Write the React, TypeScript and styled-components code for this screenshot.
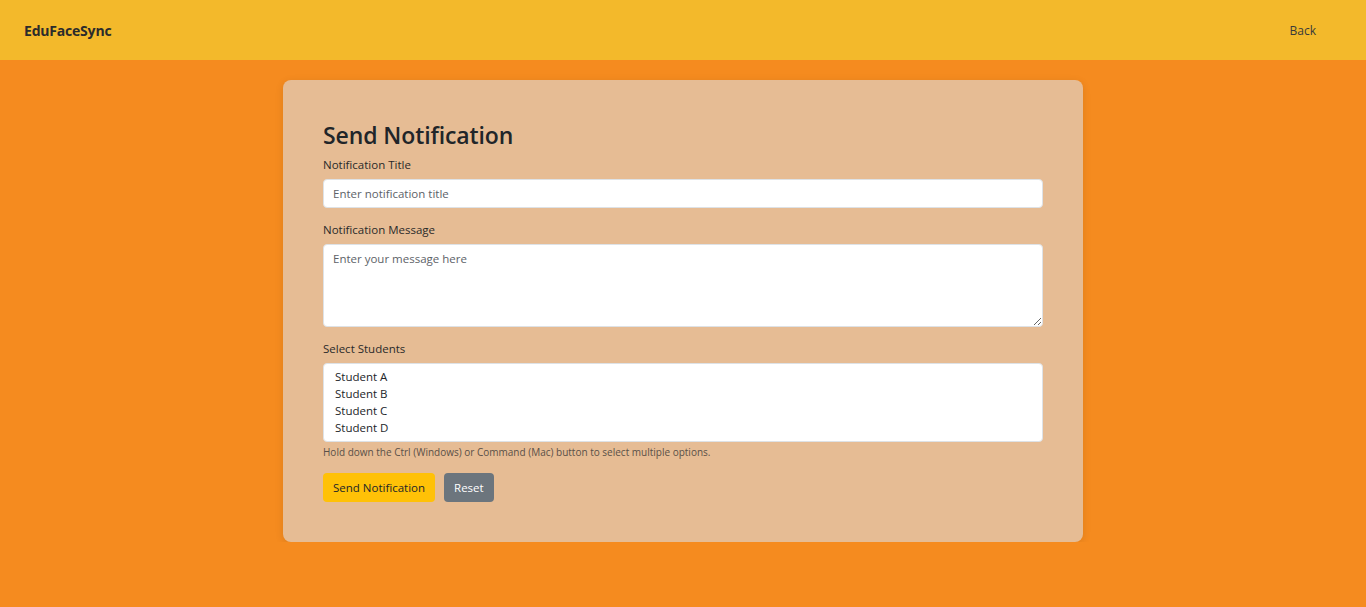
import React from "react";
import styled, { createGlobalStyle } from "styled-components";

const Global = createGlobalStyle`
  html, body { margin: 0; padding: 0; }
  body {
    background: #f58b1f;
    font-family: "Open Sans", "Noto Sans", sans-serif;
    color: #212529;
  }
  * { box-sizing: border-box; }
`;

const Header = styled.header`
  height: 60px;
  background: #f3b92b;
  display: flex;
  align-items: center;
  justify-content: space-between;
  padding: 0 24px 0 24px;
`;

const Brand = styled.div`
  font-weight: 700;
  font-size: 14px;
  color: #2b2b2b;
  letter-spacing: -0.2px;
`;

const NavLink = styled.a`
  font-size: 12px;
  color: #3a3a3a;
  text-decoration: none;
  margin-right: 26px;
`;

const Main = styled.main`
  display: flex;
  justify-content: center;
  padding-top: 20px;
`;

const Card = styled.section`
  width: 800px;
  background: #e6bc94;
  border-radius: 8px;
  box-shadow: 0 2px 8px rgba(0, 0, 0, 0.1);
  padding: 40px 40px 40px;
`;

const Title = styled.h2`
  margin: 0 0 6px;
  font-size: 23px;
  font-weight: 600;
  line-height: 30px;
  color: #212529;
  letter-spacing: -0.1px;
`;

const Field = styled.div`
  margin-bottom: 13px;
`;

const Label = styled.label`
  display: block;
  font-size: 11.5px;
  line-height: 17px;
  margin-bottom: 6px;
  color: #2a2a2a;
`;

const Input = styled.input`
  display: block;
  width: 100%;
  height: 29px;
  border: 1px solid #dee2e6;
  border-radius: 4px;
  padding: 0 9px;
  font-family: inherit;
  font-size: 11.5px;
  background: #fff;
  &::placeholder { color: #5d6268; }
`;

const TextArea = styled.textarea`
  display: block;
  width: 100%;
  height: 83px;
  border: 1px solid #dee2e6;
  border-radius: 4px;
  padding: 6px 9px;
  font-family: inherit;
  font-size: 11.5px;
  background: #fff;
  resize: vertical;
  &::placeholder { color: #5d6268; }
`;

const Select = styled.select`
  display: block;
  width: 100%;
  height: 79px;
  border: 1px solid #dee2e6;
  border-radius: 4px;
  padding: 4px 11px;
  font-family: inherit;
  font-size: 11.5px;
  color: #212529;
  background: #fff;
  overflow: hidden;
  option { padding: 1px 0; }
`;

const Help = styled.div`
  font-size: 10px;
  color: #5a5048;
  margin-top: 3px;
  line-height: 14px;
`;

const Actions = styled.div`
  display: flex;
  gap: 9px;
  margin-top: 14px;
`;

const Button = styled.button<{ $variant: "primary" | "secondary" }>`
  height: 29px;
  border: none;
  border-radius: 4px;
  padding: 0 10px;
  font-family: inherit;
  font-size: 11.5px;
  cursor: pointer;
  background: ${(p) => (p.$variant === "primary" ? "#ffc107" : "#6c757d")};
  color: ${(p) => (p.$variant === "primary" ? "#212529" : "#fff")};
`;

export default function App() {
  return (
    <>
      <Global />
      <Header>
        <Brand>EduFaceSync</Brand>
        <NavLink href="#">Back</NavLink>
      </Header>
      <Main>
        <Card>
          <Title>Send Notification</Title>
          <Field>
            <Label>Notification Title</Label>
            <Input placeholder="Enter notification title" />
          </Field>
          <Field>
            <Label>Notification Message</Label>
            <TextArea placeholder="Enter your message here" />
          </Field>
          <Field>
            <Label>Select Students</Label>
            <Select multiple>
              <option>Student A</option>
              <option>Student B</option>
              <option>Student C</option>
              <option>Student D</option>
            </Select>
            <Help>Hold down the Ctrl (Windows) or Command (Mac) button to select multiple options.</Help>
          </Field>
          <Actions>
            <Button $variant="primary">Send Notification</Button>
            <Button $variant="secondary">Reset</Button>
          </Actions>
        </Card>
      </Main>
    </>
  );
}
